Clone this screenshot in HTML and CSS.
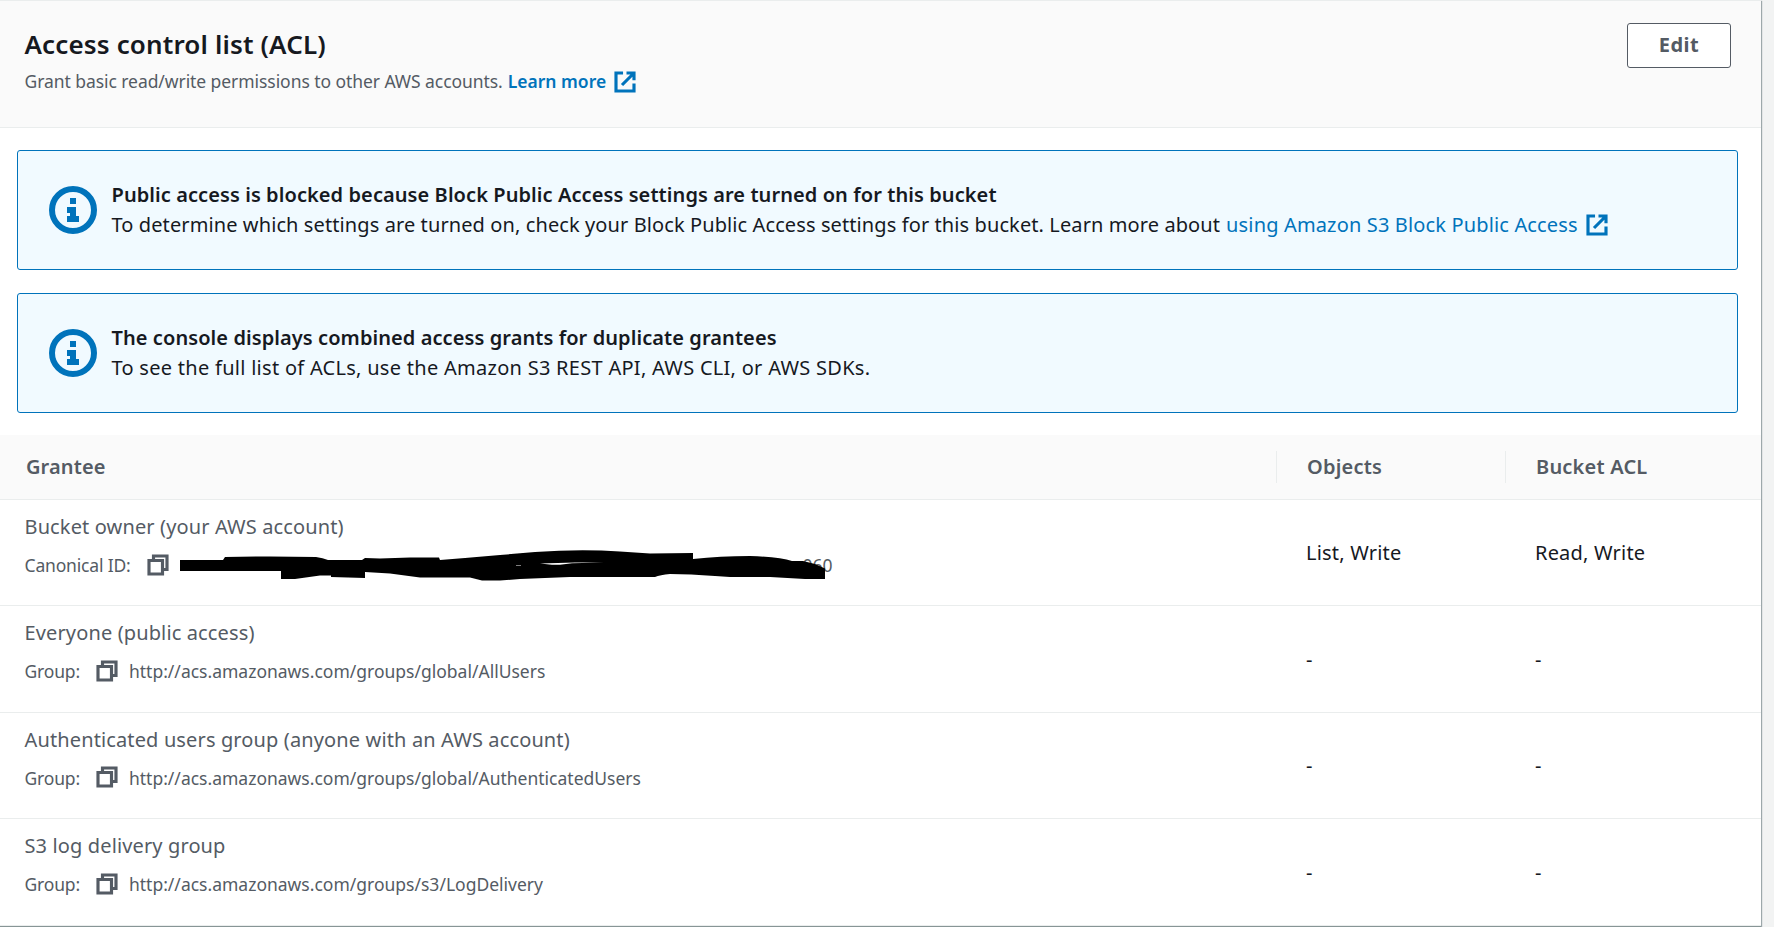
FILE: index.html
```html
<!DOCTYPE html>
<html lang="en">
<head>
  <meta charset="UTF-8" />
  <meta name="viewport" content="width=device-width, initial-scale=1.0"/>
  <title>Access control list (ACL)</title>
  <link rel="stylesheet" href="styles.css">
</head>
<body>
  <!-- shared icons -->
  <svg class="sprite" aria-hidden="true">
    <symbol id="external" viewBox="0 0 16 16">
      <path d="M9 2h5v4.800M6 10l8-8M14 9v5H2V2h4.700"/>
    </symbol>
    <symbol id="copy" viewBox="0 0 16 16">
      <path d="M2 5h9v9H2zM5 5V2h9v9h-3"/>
    </symbol>
    <symbol id="info" viewBox="0 0 16 16">
      <circle cx="8" cy="8" r="7"/>
      <path class="solid" d="M7 4h2v2H7zM6 7h3v3h1v2H6v-2h1V9H6z"/>
    </symbol>
  </svg>

  <main class="panel">
    <header class="panel-header">
      <div>
        <h2>Access control list (ACL)</h2>
        <p class="description"><span class="summary">Grant basic read/write permissions to other AWS accounts.</span><a href="#" class="learn-more">Learn more</a><svg class="icon link-icon"><use href="#external"/></svg></p>
      </div>
      <button class="edit">Edit</button>
    </header>

    <section class="alerts">
      <div class="alert">
        <svg class="info-icon"><use href="#info"/></svg>
        <div>
          <h3>Public access is blocked because Block Public Access settings are turned on for this bucket</h3>
          <p><span>To determine which settings are turned on, check your Block Public Access settings for this bucket. Learn more about</span><a href="#">using Amazon S3 Block Public Access</a><svg class="icon link-icon"><use href="#external"/></svg></p>
        </div>
      </div>
      <div class="alert">
        <svg class="info-icon"><use href="#info"/></svg>
        <div>
          <h3>The console displays combined access grants for duplicate grantees</h3>
          <p class="wide">To see the full list of ACLs, use the Amazon S3 REST API, AWS CLI, or AWS SDKs.</p>
        </div>
      </div>
    </section>

    <section class="grants">
      <div class="row head">
        <div class="grantee">Grantee</div>
        <div class="objects">Objects</div>
        <div class="bucket">Bucket ACL</div>
      </div>
      <div class="row">
        <div class="grantee">
          <div class="name">Bucket owner (your AWS account)</div>
          <div class="detail">
            <span class="label">Canonical ID:</span>
            <svg class="icon"><use href="#copy"/></svg>
            <span class="canonical-id">060
              <svg class="redaction" viewBox="180 548 648 34">
                <path fill-rule="evenodd" d="M180 560H223L225 557Q270 556 316 557Q323 558 328 560L362 560L365 558L380 558.500L410 557.500H439L440 560L465 558L500 555L535 552Q580 549 620 551.500L650 553.500L693 553V559Q720 556 750 556Q780 557 792 561H803L815 564L825 568.500V579H805L770 577H730L715 576Q690 574 670 574Q660 575 655 577H570L520 579L500 580.500H482L470 577.500H420L390 573.500L365 572V578L331 577V575.500H320L295 579H281V571H180ZM540 563.500L552 564.700H560L572 563.300L604 562.600L575 562.400ZM516 565.500H521V565H516Z"/>
              </svg>
            </span>
          </div>
        </div>
        <div class="objects">List, Write</div>
        <div class="bucket">Read, Write</div>
      </div>
      <div class="row">
        <div class="grantee">
          <div class="name">Everyone (public access)</div>
          <div class="detail">
            <span class="label">Group:</span>
            <svg class="icon"><use href="#copy"/></svg>
            <span class="url">http://acs.amazonaws.com/groups/global/AllUsers</span>
          </div>
        </div>
        <div class="objects empty">-</div>
        <div class="bucket empty">-</div>
      </div>
      <div class="row">
        <div class="grantee">
          <div class="name">Authenticated users group (anyone with an AWS account)</div>
          <div class="detail">
            <span class="label">Group:</span>
            <svg class="icon"><use href="#copy"/></svg>
            <span class="url">http://acs.amazonaws.com/groups/global/AuthenticatedUsers</span>
          </div>
        </div>
        <div class="objects empty">-</div>
        <div class="bucket empty">-</div>
      </div>
      <div class="row">
        <div class="grantee">
          <div class="name">S3 log delivery group</div>
          <div class="detail">
            <span class="label">Group:</span>
            <svg class="icon"><use href="#copy"/></svg>
            <span class="url">http://acs.amazonaws.com/groups/s3/LogDelivery</span>
          </div>
        </div>
        <div class="objects empty">-</div>
        <div class="bucket empty">-</div>
      </div>
    </section>
  </main>
</body>
</html>
```
FILE: styles.css
```css
:root {
  --text: #16191f;
  --muted: #545b64;
  --link: #0073bb;
  --line: #eaeded;
  --shade: #fafafa;
}
* {
  box-sizing: border-box;
}
body {
  margin: 0;
  height: 927px;
  overflow: hidden;
  background: #f2f3f3;
  color: var(--text);
  font-family: "Noto Sans", "Open Sans", sans-serif;
  font-size: 20px;
  line-height: 30px;
  letter-spacing: 0.1px;
  white-space: nowrap;
}
h2, h3, p {
  margin: 0;
}
a {
  color: var(--link);
  text-decoration: none;
}
.sprite {
  position: absolute;
  width: 0;
  height: 0;
}
.icon {
  width: 24px;
  height: 24px;
  flex: none;
  fill: none;
  stroke: currentColor;
  stroke-width: 2.1;
}
.link-icon {
  color: var(--link);
}
.panel {
  width: 1761px;
  height: 927px;
  background: #fff;
  border-top: 1px solid var(--line);
  border-bottom: 1px solid #879596;
  box-shadow: 1px 1px 1px rgba(0, 28, 36, 0.35);
}

/* Header */
.panel-header {
  display: flex;
  justify-content: space-between;
  align-items: flex-start;
  height: 127px;
  padding: 22px 30px 0 24.5px;
  background: var(--shade);
  border-bottom: 1px solid var(--line);
}
h2 {
  margin-top: 3px;
  font-size: 26px;
  font-weight: 600;
  line-height: 36px;
  letter-spacing: 0.14px;
}
.description {
  display: flex;
  align-items: center;
  margin-top: 6px;
  font-size: 17.5px;
  line-height: 27px;
  color: var(--muted);
}
.summary {
  letter-spacing: -0.065px;
}
.learn-more {
  margin-left: 5px;
  font-weight: 600;
  letter-spacing: 0;
}
.description .link-icon {
  margin-left: 7px;
}
.edit {
  width: 104px;
  height: 45px;
  padding: 0 0 1px;
  font: 700 20px/30px "Noto Sans", sans-serif;
  letter-spacing: 0.5px;
  color: var(--muted);
  background: #fff;
  border: 1px solid var(--muted);
  border-radius: 3px;
}

/* Alerts */
.alerts {
  display: flex;
  flex-direction: column;
  gap: 23px;
  padding: 22px 23px 22px 17px;
}
.alert {
  display: flex;
  align-items: center;
  height: 120px;
  padding-left: 31px;
  gap: 14.5px;
  background: #f1faff;
  border: 1px solid var(--link);
  border-radius: 3px;
}
.info-icon {
  width: 48px;
  height: 48px;
  fill: none;
  stroke: var(--link);
  stroke-width: 2;
}
.solid {
  fill: var(--link);
  stroke: none;
}
h3 {
  font-size: 20px;
  font-weight: 600;
  letter-spacing: 0.08px;
}
.alert p {
  display: flex;
  align-items: center;
}
.alert .wide {
  letter-spacing: 0.28px;
}
.alert a {
  margin-left: 6px;
  letter-spacing: 0.15px;
}
.alert .link-icon {
  margin-left: 7.5px;
}

/* Grants table */
.row {
  display: flex;
  height: 106.4px;
  border-bottom: 1px solid var(--line);
}
.grantee {
  width: 1276px;
  padding: 12px 0 0 24.5px;
  color: var(--muted);
}
.name {
  letter-spacing: 0.13px;
}
.objects, .bucket {
  align-self: center;
  width: 229px;
  padding-left: 30px;
  letter-spacing: 0.2px;
}
.empty {
  padding-top: 2px;
}
.head {
  height: 65px;
  align-items: center;
  background: var(--shade);
  color: var(--muted);
  font-weight: 600;
}
.head .grantee {
  padding: 0 0 0 26px;
}
.head .objects, .head .bucket {
  height: 32px;
  line-height: 32px;
  border-left: 1px solid var(--line);
}
.detail {
  display: flex;
  align-items: center;
  margin-top: 10px;
  font-size: 17.5px;
  line-height: 27px;
  letter-spacing: 0;
}
.label {
  letter-spacing: -0.17px;
}
.detail .icon {
  margin: -2px 9.5px 0 15.5px;
}
.canonical-id {
  position: relative;
  width: 653px;
  text-align: right;
}
/* marker scribble over the account id */
.redaction {
  position: absolute;
  left: 0;
  top: -4px;
  width: 648px;
  height: 34px;
}
```
